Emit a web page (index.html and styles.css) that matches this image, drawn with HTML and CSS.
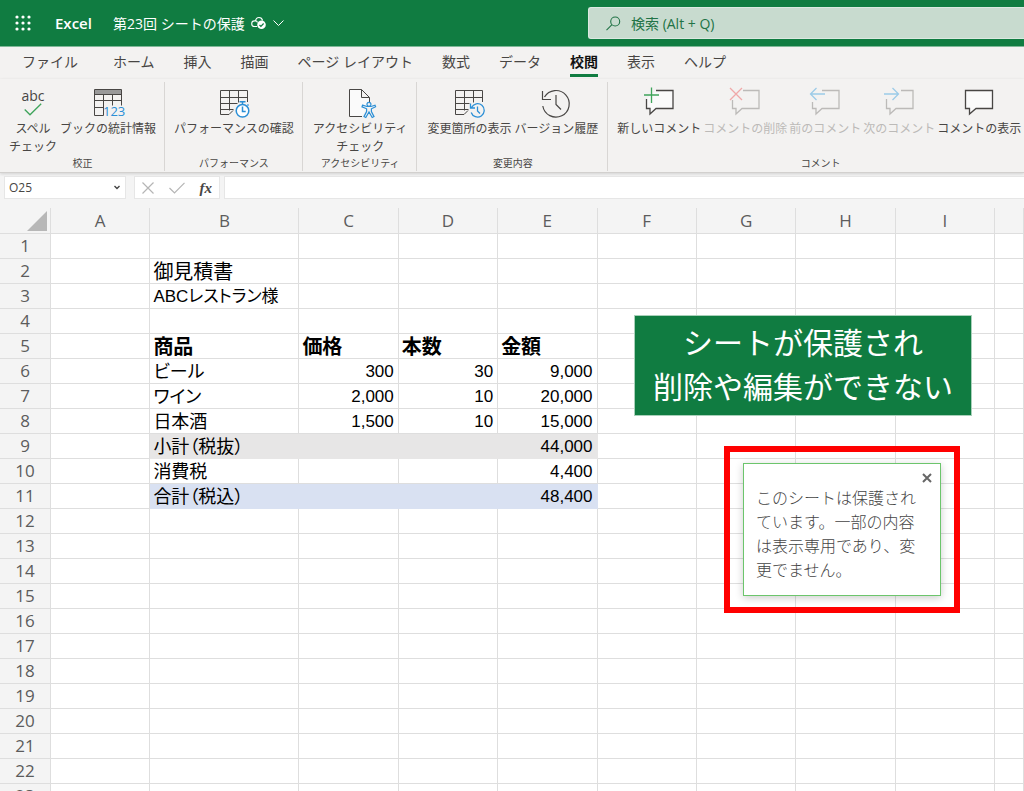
FILE: index.html
```html
<!DOCTYPE html>
<html lang="ja">
<head>
<meta charset="utf-8">
<title>第23回 シートの保護 - Excel</title>
<link rel="stylesheet" href="styles.css">
</head>
<body>
<div class="app">
  <header class="topbar">
    <button class="launcher" aria-label="アプリ起動ツール">
      <svg width="16" height="16" viewBox="0 0 16 16" fill="#fff"><circle cx="2" cy="2" r="1.6"/><circle cx="8" cy="2" r="1.6"/><circle cx="14" cy="2" r="1.6"/><circle cx="2" cy="8" r="1.6"/><circle cx="8" cy="8" r="1.6"/><circle cx="14" cy="8" r="1.6"/><circle cx="2" cy="14" r="1.6"/><circle cx="8" cy="14" r="1.6"/><circle cx="14" cy="14" r="1.6"/></svg>
    </button>
    <span class="brand">Excel</span>
    <button class="docname">
      <span>第23回 シートの保護</span>
      <svg width="16" height="14" viewBox="0 0 16 14" fill="none"><path d="M6 10.500H3.500a2.800 2.800 0 0 1 0-5.600h1C4.800 3 6.200 1.500 8 1.500s3.200 1.300 3.600 3M6.500 6.500C6.200 5.600 5.500 5 4.500 4.900" stroke="#fff" stroke-width="1.1"/><circle cx="10.500" cy="8.800" r="4.300" fill="#fff"/><path d="M8.500 9l1.400 1.400 2.700-2.900" stroke="#107c41" stroke-width="1.200"/></svg>
      <svg width="11" height="6" viewBox="0 0 11 6" fill="none" stroke="#fff"><path d="M.5.5l5 5 5-5"/></svg>
    </button>
    <label class="search">
      <svg width="15" height="15" viewBox="0 0 15 15" fill="none" stroke="#217346" stroke-width="1.100"><circle cx="9.200" cy="5.500" r="4.500"/><path d="M6 8.700L.5 14.200"/></svg>
      <input type="text" placeholder="検索 (Alt + Q)" aria-label="検索">
    </label>
  </header>

  <nav class="tabs">
    <button class="tab tab-file">ファイル</button>
    <button class="tab">ホーム</button>
    <button class="tab">挿入</button>
    <button class="tab">描画</button>
    <button class="tab">ページ レイアウト</button>
    <button class="tab">数式</button>
    <button class="tab">データ</button>
    <button class="tab tab-active">校閲</button>
    <button class="tab">表示</button>
    <button class="tab">ヘルプ</button>
  </nav>

  <div class="ribbon">
    <section class="group">
      <div class="tools">
        <button class="tool">
          <span class="icon abc">abc<svg width="18" height="13" viewBox="0 0 18 13" fill="none" stroke="#3fa45b" stroke-width="1.300"><path d="M.7 6.500L6 11.800 17.200.7"/></svg></span>
          スペル<br>チェック
        </button>
        <button class="tool">
          <svg class="icon" width="30" height="30" viewBox="0 0 30 30" fill="none" stroke="#484644"><path d="M1.500 1.500h27v16M1.500 1.500v26h9M1.500 6.500h27M1.500 12.500h27M1.500 19.500h9M10.500 6.500v21M19.500 6.500v11"/><path d="M2 2h26v4H2z" fill="#999" stroke="none"/><text x="10" y="28" class="digits">123</text></svg>
          ブックの統計情報
        </button>
      </div>
      <h2>校正</h2>
    </section>
    <section class="group">
      <div class="tools">
        <button class="tool">
          <svg class="icon" width="30" height="30" viewBox="0 0 30 30" fill="none" stroke="#484644"><path d="M28.500 14V2.500h-27v24h8.500l4-4M1.500 9.500h27M1.500 15.500h17M1.500 21.500h13M10.500 2.500v20M19.500 2.500v12"/><g stroke="#2b8fd6" stroke-width="1.500"><circle cx="23.500" cy="22.800" r="6.300" fill="#fff"/><path d="M23.500 18.500v5h3.200M23.500 16v-2M20.500 13.800h6M28.500 17.500l1-1"/></g></svg>
          パフォーマンスの確認
        </button>
      </div>
      <h2>パフォーマンス</h2>
    </section>
    <section class="group group-roomy">
      <div class="tools">
        <button class="tool">
          <svg class="icon" width="30" height="30" viewBox="0 0 30 30" fill="none" stroke="#484644"><path d="M17 28.500H4.500v-27h12l8 8V14M16.500 1.500v8h8" fill="#fafafa"/><path d="M24 14.300a2 2 0 1 1-.1 0M17.500 17.200l4.500 1.300h4l4-1.300 .6 1.600-4.200 2v2.800l2.600 5-1.800.9-3.200-5.500-3.200 5.500-1.800-.9 2.600-5v-2.800l-4.600-2z" stroke="#2b8fd6" stroke-width="1.200" fill="#f3f2f1"/></svg>
          アクセシビリティ<br>チェック
        </button>
      </div>
      <h2>アクセシビリティ</h2>
    </section>
    <section class="group group-roomy">
      <div class="tools">
        <button class="tool">
          <svg class="icon" width="30" height="30" viewBox="0 0 30 30" fill="none" stroke="#484644"><path d="M28.500 14V2.500h-27v24h8.500l4-4M1.500 9.500h27M1.500 15.500h14M1.500 21.500h13M10.500 2.500v20M19.500 2.500v12"/><g stroke="#2b8fd6" stroke-width="1.300"><path d="M17.500 19.500a6.700 6.700 0 1 1-.3 5M16.500 15.500v4.500h4.500M23.500 18.500v4.500l2.500 2.500"/></g></svg>
          変更箇所の表示
        </button>
        <button class="tool">
          <svg class="icon" width="30" height="30" viewBox="0 0 30 30" fill="none" stroke="#484644" stroke-width="1.200"><path d="M3.500 9A13.300 13.300 0 1 1 1.800 18M1.500 3v8.500H10M15 7v9.500l5 5"/></svg>
          バージョン履歴
        </button>
      </div>
      <h2>変更内容</h2>
    </section>
    <section class="group group-wide">
      <div class="tools">
        <button class="tool">
          <svg class="icon" width="30" height="30" viewBox="0 0 30 30" fill="none" stroke="#484644" stroke-width="1.300"><path d="M12 2.500h17v18H12l-6 5.500v-5.500H2.500V11" fill="#fafafa"/><path d="M0 7h15M7.500-.5V15" stroke="#3fa45b"/></svg>
          新しいコメント
        </button>
        <button class="tool" disabled>
          <svg class="icon" width="30" height="30" viewBox="0 0 30 30" fill="none" stroke="#bcbab8" stroke-width="1.300"><path d="M13 2.500h16v18H12l-6 5.500v-5.500H2.500V12"/><path d="M0 0l12 12M12 0L0 12" stroke="#f0a9a9"/></svg>
          コメントの削除
        </button>
        <button class="tool" disabled>
          <svg class="icon" width="30" height="30" viewBox="0 0 30 30" fill="none" stroke="#bcbab8" stroke-width="1.300"><path d="M12 2.500h17v18H12l-6 5.500v-5.500H2.500V14"/><path d="M15 6H.5M6.500 0l-6 6 6 6" stroke="#9ccbe8"/></svg>
          前のコメント
        </button>
        <button class="tool" disabled>
          <svg class="icon" width="30" height="30" viewBox="0 0 30 30" fill="none" stroke="#bcbab8" stroke-width="1.300"><path d="M17 2.500h12v18H12l-6 5.500v-5.500H2.500V11"/><path d="M0 6h14.500M8.500 0l6 6-6 6" stroke="#9ccbe8"/></svg>
          次のコメント
        </button>
        <button class="tool">
          <svg class="icon" width="30" height="30" viewBox="0 0 30 30" fill="none" stroke="#484644" stroke-width="1.300"><path d="M1.500 2.500h27v18H12l-6.500 5.500v-5.500h-4z" fill="#fafafa"/></svg>
          コメントの表示
        </button>
      </div>
      <h2>コメント</h2>
    </section>
  </div>

  <div class="formulabar">
    <div class="namebox">
      <input type="text" value="O25" aria-label="名前ボックス">
      <button aria-label="名前の一覧"><svg width="6" height="5" viewBox="0 0 6 5" fill="none" stroke="#444" stroke-width="1.400"><path d="M.5 1L3 3.500 5.500 1"/></svg></button>
    </div>
    <div class="fxbox">
      <button aria-label="キャンセル"><svg width="12" height="12" viewBox="0 0 12 12" stroke="#b5b5b5" stroke-width="1.200"><path d="M.5.5l11 11M11.500.5l-11 11"/></svg></button>
      <button aria-label="入力"><svg width="16" height="12" viewBox="0 0 16 12" fill="none" stroke="#b5b5b5" stroke-width="1.200"><path d="M.5 6l5 5L15.500.8"/></svg></button>
      <button class="fx" aria-label="関数の挿入">fx</button>
    </div>
    <input class="formula" type="text" aria-label="数式">
  </div>

  <main class="sheet">
    <table class="grid">
      <colgroup><col class="c-row"><col><col class="c-b"><col><col><col><col><col><col><col><col class="c-j"></colgroup>
      <thead>
        <tr><th class="corner"><svg width="20" height="20" viewBox="0 0 20 20"><path d="M20 0v20H0z" fill="#b7b7b7"/></svg></th><th>A</th><th>B</th><th>C</th><th>D</th><th>E</th><th>F</th><th>G</th><th>H</th><th>I</th><th></th></tr>
      </thead>
      <tbody>
        <tr><th>1</th><td></td><td></td><td></td><td></td><td></td><td></td><td></td><td></td><td></td><td></td></tr>
        <tr><th>2</th><td></td><td class="title">御見積書</td><td></td><td></td><td></td><td></td><td></td><td></td><td></td><td></td></tr>
        <tr><th>3</th><td></td><td class="client">ABCレストラン様</td><td></td><td></td><td></td><td></td><td></td><td></td><td></td><td></td></tr>
        <tr><th>4</th><td></td><td></td><td></td><td></td><td></td><td></td><td></td><td></td><td></td><td></td></tr>
        <tr class="heads"><th>5</th><td></td><td>商品</td><td>価格</td><td>本数</td><td>金額</td><td></td><td></td><td></td><td></td><td></td></tr>
        <tr><th>6</th><td></td><td>ビール</td><td class="num">300</td><td class="num">30</td><td class="num">9,000</td><td></td><td></td><td></td><td></td><td></td></tr>
        <tr><th>7</th><td></td><td>ワイン</td><td class="num">2,000</td><td class="num">10</td><td class="num">20,000</td><td></td><td></td><td></td><td></td><td></td></tr>
        <tr><th>8</th><td></td><td>日本酒</td><td class="num">1,500</td><td class="num">10</td><td class="num">15,000</td><td></td><td></td><td></td><td></td><td></td></tr>
        <tr><th>9</th><td></td><td class="sub">小計（税抜）</td><td class="sub"></td><td class="sub"></td><td class="sub num">44,000</td><td></td><td></td><td></td><td></td><td></td></tr>
        <tr><th>10</th><td></td><td>消費税</td><td></td><td></td><td class="num">4,400</td><td></td><td></td><td></td><td></td><td></td></tr>
        <tr><th>11</th><td></td><td class="total">合計（税込）</td><td class="total"></td><td class="total"></td><td class="total num">48,400</td><td></td><td></td><td></td><td></td><td></td></tr>
        <tr><th>12</th><td></td><td></td><td></td><td></td><td></td><td></td><td></td><td></td><td></td><td></td></tr>
        <tr><th>13</th><td></td><td></td><td></td><td></td><td></td><td></td><td></td><td></td><td></td><td></td></tr>
        <tr><th>14</th><td></td><td></td><td></td><td></td><td></td><td></td><td></td><td></td><td></td><td></td></tr>
        <tr><th>15</th><td></td><td></td><td></td><td></td><td></td><td></td><td></td><td></td><td></td><td></td></tr>
        <tr><th>16</th><td></td><td></td><td></td><td></td><td></td><td></td><td></td><td></td><td></td><td></td></tr>
        <tr><th>17</th><td></td><td></td><td></td><td></td><td></td><td></td><td></td><td></td><td></td><td></td></tr>
        <tr><th>18</th><td></td><td></td><td></td><td></td><td></td><td></td><td></td><td></td><td></td><td></td></tr>
        <tr><th>19</th><td></td><td></td><td></td><td></td><td></td><td></td><td></td><td></td><td></td><td></td></tr>
        <tr><th>20</th><td></td><td></td><td></td><td></td><td></td><td></td><td></td><td></td><td></td><td></td></tr>
        <tr><th>21</th><td></td><td></td><td></td><td></td><td></td><td></td><td></td><td></td><td></td><td></td></tr>
        <tr><th>22</th><td></td><td></td><td></td><td></td><td></td><td></td><td></td><td></td><td></td><td></td></tr>
        <tr><th>23</th><td></td><td></td><td></td><td></td><td></td><td></td><td></td><td></td><td></td><td></td></tr>
      </tbody>
    </table>
    <p class="banner">シートが保護され<br>削除や編集ができない</p>
    <div class="highlight">
      <div class="notice" role="alert">
        <button aria-label="閉じる"><svg width="10" height="10" viewBox="0 0 10 10" stroke="#666" stroke-width="2"><path d="M1 1l8 8M9 1L1 9"/></svg></button>
        <p>このシートは保護されています。一部の内容は表示専用であり、変更でません。</p>
      </div>
    </div>
  </main>
</div>
</body>
</html>
```

FILE: styles.css
```css
* { box-sizing: border-box; }

body {
  margin: 0;
  background: #f4f4f4;
  color: #484644;
  font-family: "Open Sans", "Noto Sans CJK JP", sans-serif;
  font-size: 14px;
}

button, input {
  margin: 0;
  padding: 0;
  border: 0;
  background: none;
  color: inherit;
  font: inherit;
}

svg { display: block; flex: none; }

.app {
  display: flex;
  flex-direction: column;
  height: 100vh;
  overflow: hidden;
}

/* Title bar */
.topbar {
  display: flex;
  align-items: center;
  flex: none;
  height: 47px;
  padding-left: 15px;
  background: #107c41;
  border-bottom: 1px solid #7fb898;
  color: #fff;
}

.brand {
  width: 58px;
  margin-left: 24px;
  font-size: 15px;
  font-weight: 600;
}

.docname {
  display: flex;
  align-items: center;
  gap: 6px;
  white-space: nowrap;
}

.search {
  display: flex;
  align-items: center;
  gap: 10px;
  flex: none;
  width: 436px;
  height: 32px;
  margin-left: auto;
  padding-left: 17px;
  border: 1px solid #dbe9e1;
  border-right: 0;
  border-radius: 3px 0 0 3px;
  background: #c8dbcf;
}

.search input { flex: 1; min-width: 0; }
.search input::placeholder { color: #217346; opacity: 1; }

/* Tabs */
.tabs {
  display: flex;
  gap: 29px;
  flex: none;
  height: 32px;
  padding-left: 22px;
  background: #f3f2f1;
}

.tab {
  height: 30px;
  border-bottom: 3px solid transparent;
  white-space: nowrap;
}

.tab-file { margin-right: 6px; }

.tab-active {
  border-bottom-color: #107c41;
  color: #111;
  font-weight: 700;
}

/* Ribbon */
.ribbon {
  display: flex;
  flex: none;
  padding: 3px 0 1px;
  background: #f3f2f1;
  border-bottom: 1px solid #d2d0ce;
  box-shadow: 0 1px 3px #00000026;
}

.group {
  display: flex;
  flex-direction: column;
  flex: none;
  padding: 6px 8px 0 9px;
  border-right: 1px solid #d8d6d4;
}

.group-roomy { padding: 6px 9px 0 10px; }

.group-wide {
  flex: 1;
  padding-right: 0;
  border-right: 0;
}

.tools {
  display: flex;
  align-items: flex-start;
  gap: 3px;
  height: 68px;
}

.group-wide .tools { gap: 2px; }

.tool {
  font-size: 12px;
  line-height: 18px;
  white-space: nowrap;
}

.tool:disabled { color: #bcbab8; }

.icon {
  height: 30px;
  margin: 0 auto 2px;
  overflow: visible;
}

.abc {
  display: flex;
  flex-direction: column;
  align-items: center;
  font-size: 14px;
  line-height: 15px;
}

.digits {
  fill: #2b8fd6;
  stroke: none;
  font-size: 13px;
}

.group h2 {
  margin: 0;
  font-size: 10px;
  font-weight: 400;
  line-height: 15px;
  text-align: center;
}

/* Formula bar */
.formulabar {
  display: flex;
  flex: none;
  height: 35px;
  padding: 3px 0 9px 4px;
  font-size: 12px;
}

.namebox {
  display: flex;
  width: 122px;
  margin-right: 8px;
  padding: 0 5px 0 4px;
  border: 1px solid #e6e6e6;
  background: #fff;
}

.namebox input { flex: 1; min-width: 0; }

.fxbox {
  display: flex;
  align-items: center;
  justify-content: space-between;
  width: 86px;
  margin-right: 4px;
  padding: 0 7px;
  border: 1px solid #e6e6e6;
  background: #fff;
}

.fx {
  font-family: "Liberation Serif", serif;
  font-size: 15px;
  font-style: italic;
  font-weight: 700;
  line-height: 18px;
}

.formula {
  flex: 1;
  min-width: 0;
  border: 1px solid #e6e6e6;
  border-right: 0;
  background: #fff;
}

/* Worksheet */
.sheet {
  position: relative;
  flex: 1;
  min-height: 0;
  overflow: hidden;
}

.grid {
  width: 100%;
  table-layout: fixed;
  border-collapse: separate;
  border-spacing: 0;
  background: #fff;
  color: #000;
  font-family: "Liberation Sans", "Noto Sans CJK JP", sans-serif;
}

.c-row { width: 51px; }
.c-b { width: 149px; }
.c-j { width: 29px; }

.grid th,
.grid td {
  height: 25px;
  padding: 0 4px;
  border-right: 1px solid #dedede;
  border-bottom: 1px solid #dedede;
  font-size: 18px;
  line-height: 24px;
  text-align: left;
  white-space: nowrap;
}

.grid td {
  padding: 2px 4px 0 3px;
  line-height: 22px;
  font-feature-settings: "palt";
}

.grid th {
  background: #f4f4f4;
  color: #5c5c5c;
  font-family: "Open Sans", sans-serif;
  font-size: 17px;
  font-weight: 400;
  text-align: center;
}

.grid thead th { height: 26px; }
.grid .corner svg { margin-left: auto; }
.grid .corner { padding: 0 3px; }
.grid .title { font-size: 20px; }
.grid .client { font-size: 17px; }
.grid .heads td { font-size: 20px; font-weight: 700; }

.grid .num {
  font-size: 17px;
  text-align: right;
}

.grid .sub { background: #e7e6e6; border-color: #e7e6e6; }
.grid .total { background: #d9e1f2; border-color: #d9e1f2; }

/* Callouts over the sheet */
.banner {
  position: absolute;
  top: 107px;
  left: 634px;
  margin: 0;
  padding: 3px 18px 8px;
  border: 1px solid #a9d0ba;
  background: #107c41;
  color: #fff;
  font-family: "Noto Sans CJK JP", sans-serif;
  font-size: 30px;
  font-weight: 400;
  line-height: 44px;
  text-align: center;
}

.highlight {
  position: absolute;
  top: 238px;
  left: 724px;
  padding: 11px 13px;
  border: 6px solid #f00;
}

.notice {
  width: 198px;
  padding: 8px 8px 13px 12px;
  border: 1px solid #6cc56c;
  background: #fff;
  box-shadow: 0 2px 8px #00000033;
  color: #444;
  font-size: 16px;
  font-weight: 300;
  line-height: 24px;
}

.notice button {
  display: block;
  margin: 1px 0 3px auto;
}

.notice p {
  width: 166px;
  margin: 0;
}
```
